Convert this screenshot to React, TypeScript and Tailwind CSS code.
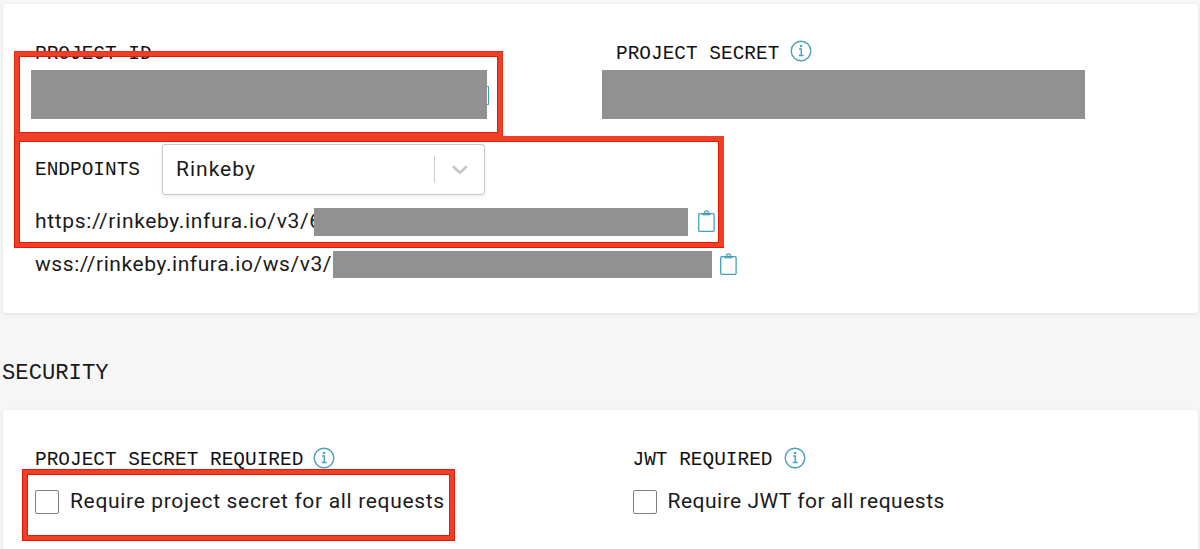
import type { ReactNode } from "react";

function InfoIcon() {
  return (
    <svg className="h-[22px] w-[22px] shrink-0" viewBox="0 0 22 22" fill="none" stroke="#4da3bd" strokeWidth="1.4">
      <circle cx="11" cy="11" r="9.8" />
      <path d="M9 9.1h2.3v6.4M8.7 15.6h5" strokeWidth="1.5" />
      <circle cx="11" cy="6" r="1.3" fill="#4da3bd" stroke="none" />
    </svg>
  );
}

function ClipboardIcon() {
  return (
    <svg className="h-[22px] w-[17px] shrink-0" viewBox="0 0 17 22" fill="none" stroke="#45a0ba" strokeWidth="1.3">
      <rect x="0.7" y="3.7" width="15.4" height="17.6" rx="1" />
      <path d="M4.7 3.4h7.4v1.5H4.7z" fill="#45a0ba" strokeWidth="0.8" />
      <path d="M6.6 3.2V2.6a1.8 1.8 0 0 1 3.6 0v0.6" />
    </svg>
  );
}

function Label({ children }: { children: ReactNode }) {
  return (
    <span className="block font-['Liberation_Mono',monospace] text-[19.4px] leading-6 tracking-[0.03px] whitespace-pre text-[#111]">
      {children}
    </span>
  );
}

function Check({ children }: { children: ReactNode }) {
  return (
    <label className="flex h-6 items-center gap-[11px]">
      <span className="h-6 w-6 shrink-0 rounded-[2px] border border-[#808080] bg-white" />
      {children}
    </label>
  );
}

export default function App() {
  return (
    <div className="relative h-[549px] w-[1200px] overflow-hidden bg-[#f6f6f6] pt-1 pl-[3px] font-[Roboto,sans-serif] text-[21px] text-[#1a1a1a]">
      <section className="h-[309px] w-[1195px] rounded-[3px] bg-white pt-9 shadow-[0_1px_4px_rgba(0,0,0,0.09)]">
        <div className="flex">
          <div className="w-[571px] pl-7">
            <div className="flex h-[30px] items-start pl-1 pt-[2px]">
              <Label>PROJECT ID</Label>
            </div>
            <div className="relative h-[49px] w-[456px] bg-[#919191]">
              <span className="absolute top-4 left-[456px] h-[19px] w-[2px] rounded-r-[1px] border-y border-r border-[#45a0ba]" />
            </div>
          </div>
          <div className="pl-7">
            <div className="flex h-[30px] items-start gap-[11px] pl-[14px]">
              <span className="pt-[2px]"><Label>PROJECT SECRET</Label></span>
              <InfoIcon />
            </div>
            <div className="h-[49px] w-[483px] bg-[#919191]" />
          </div>
        </div>

        <div className="mt-[25px] flex h-[51px] items-center pl-8">
          <div className="w-[127px]"><Label>ENDPOINTS</Label></div>
          <div className="flex h-[51px] w-[323px] items-center rounded-[3px] border border-[#c8c8c8] bg-white pl-[13px] shadow-[0_2px_5px_rgba(0,0,0,0.07)]">
            <span className="flex-1 tracking-[1px]">Rinkeby</span>
            <span className="h-[27px] w-px bg-[#ccc]" />
            <svg className="mt-[2px] mr-4 ml-[17px] h-[11px] w-[16px]" viewBox="0 0 16 11" fill="none" stroke="#c8c8c8" strokeWidth="2.8" strokeLinecap="round" strokeLinejoin="round">
              <path d="M1.7 2l6.2 5.8L14.1 2" />
            </svg>
          </div>
        </div>

        <div className="mt-3 flex h-[29px] items-center pl-8">
          <span className="w-[279px] whitespace-nowrap tracking-[0.66px]">https://rinkeby.infura.io/v3/6</span>
          <span className="relative h-[28px] w-[374px] bg-[#919191]" />
          <span className="-mt-[2px] ml-[10px] flex"><ClipboardIcon /></span>
        </div>
        <div className="mt-[14px] flex h-[29px] items-center pl-8">
          <span className="w-[298px] whitespace-nowrap tracking-[0.57px]">wss://rinkeby.infura.io/ws/v3/</span>
          <span className="relative h-[27px] w-[379px] bg-[#919191]" />
          <span className="-mt-[2px] ml-[8px] flex"><ClipboardIcon /></span>
        </div>
      </section>

      <h2 className="-ml-px flex h-[97px] items-center pt-[24px] font-['Liberation_Mono',monospace] text-[22.2px] text-[#1a1a1a]">SECURITY</h2>

      <section className="grid h-[150px] w-[1195px] grid-cols-2 rounded-[3px] bg-white pt-9 pl-8 shadow-[0_1px_4px_rgba(0,0,0,0.09)]">
        <div>
          <div className="flex h-6 items-center gap-[10px]">
            <span className="pt-[4px]"><Label>PROJECT SECRET REQUIRED</Label></span>
            <InfoIcon />
          </div>
          <div className="mt-5">
            <Check><span className="tracking-[0.67px]">Require project secret for all requests</span></Check>
          </div>
        </div>
        <div className="pl-4">
          <div className="flex h-6 items-center gap-[11px]">
            <span className="pt-[4px]"><Label>JWT REQUIRED</Label></span>
            <InfoIcon />
          </div>
          <div className="mt-5">
            <Check><span className="tracking-[0.5px]">Require JWT for all requests</span></Check>
          </div>
        </div>
      </section>

      <div className="absolute top-[52px] left-[15px] h-[85px] w-[487px] border-[4px] border-[#ec4126] shadow-[0_0_0_1px_#f02a18,inset_0_0_0_1px_#ee1508]" />
      <div className="absolute top-[136px] left-[15px] h-[111px] w-[709px] border-4 border-t-[5px] border-r-[5px] border-[#ec4126] shadow-[-1px_0_0_#ee1508,0_1px_0_#ee1508,-1px_1px_0_#ee1508,inset_0_0_0_1px_#ee1508]" />
      <div className="absolute top-[470px] left-[23px] h-[70px] w-[431px] border-4 border-[#ec4126] shadow-[0_0_0_1px_#ee1508,inset_0_0_0_1px_#ee1508]" />
    </div>
  );
}
